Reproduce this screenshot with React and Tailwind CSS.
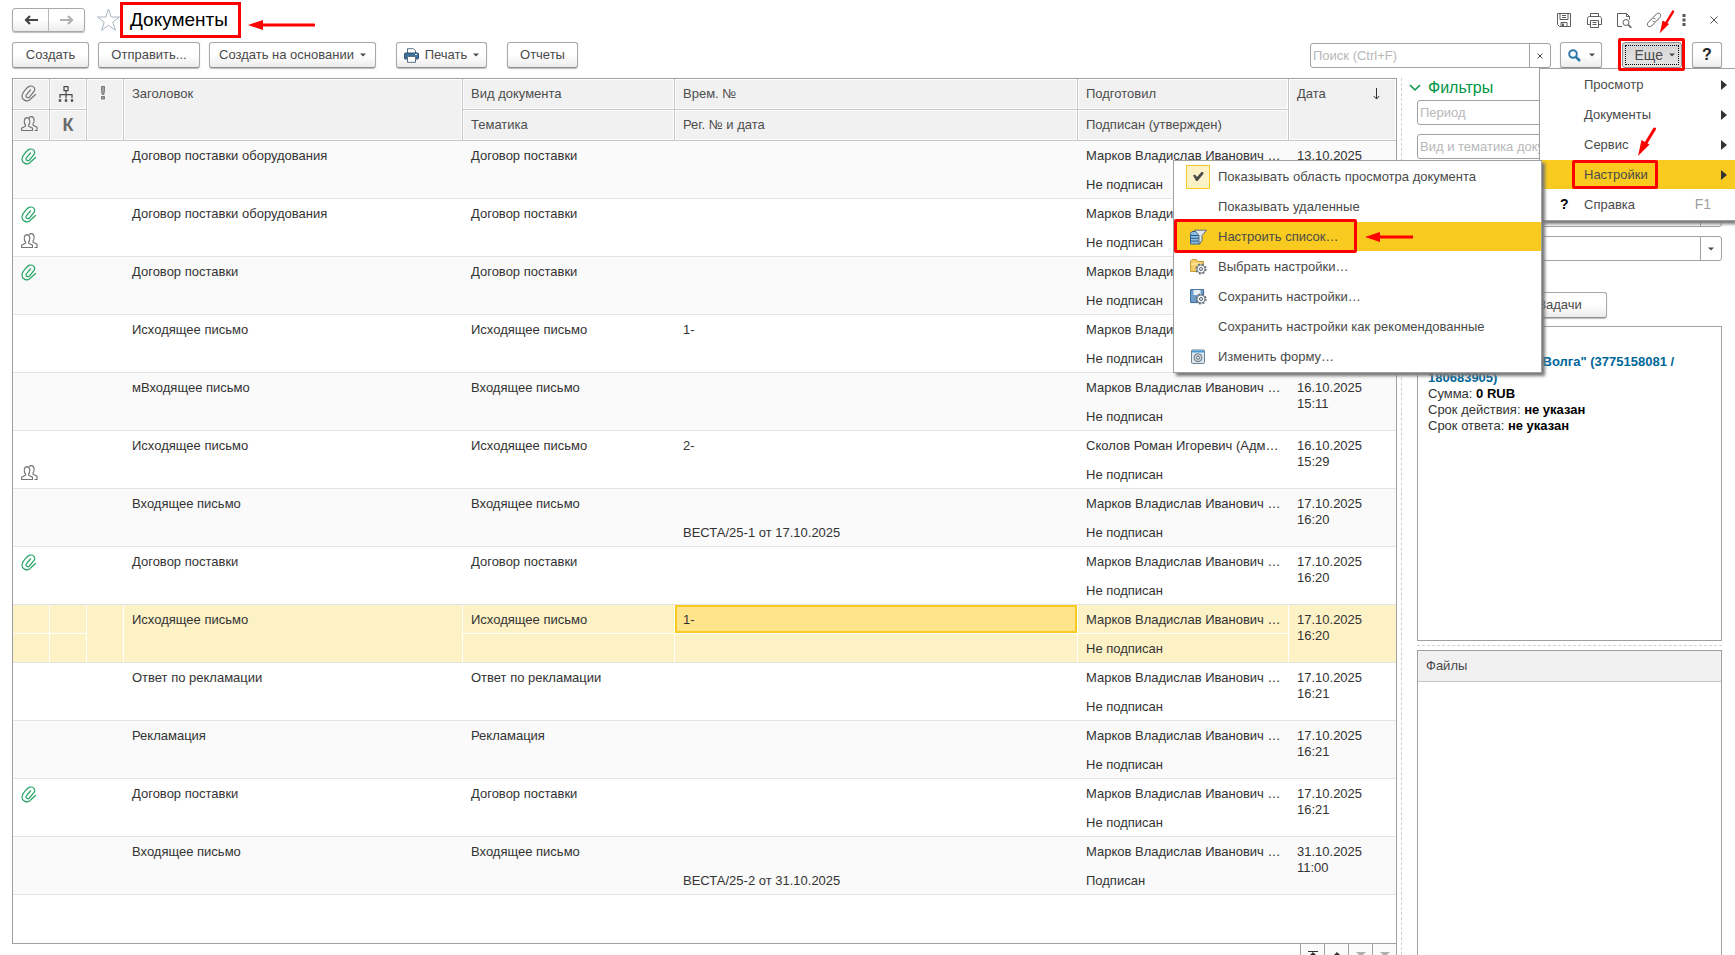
import clsx from 'clsx';

const rows = [
  { clip: true, title: 'Договор поставки оборудования', kind: 'Договор поставки', author: 'Марков Владислав Иванович …', date: '13.10.2025', time: '15:02' },
  { clip: true, people: true, title: 'Договор поставки оборудования', kind: 'Договор поставки', author: 'Марков Владислав Иванович …', date: '13.10.2025', time: '15:02' },
  { clip: true, title: 'Договор поставки', kind: 'Договор поставки', author: 'Марков Владислав Иванович …', date: '13.10.2025', time: '15:02' },
  { title: 'Исходящее письмо', kind: 'Исходящее письмо', temp: '1-', author: 'Марков Владислав Иванович …', date: '16.10.2025', time: '15:02' },
  { title: 'мВходящее письмо', kind: 'Входящее письмо', author: 'Марков Владислав Иванович …', date: '16.10.2025', time: '15:11' },
  { people: true, title: 'Исходящее письмо', kind: 'Исходящее письмо', temp: '2-', author: 'Сколов Роман Игоревич (Адм…', date: '16.10.2025', time: '15:29' },
  { title: 'Входящее письмо', kind: 'Входящее письмо', reg: 'ВЕСТА/25-1 от 17.10.2025', author: 'Марков Владислав Иванович …', date: '17.10.2025', time: '16:20' },
  { clip: true, title: 'Договор поставки', kind: 'Договор поставки', author: 'Марков Владислав Иванович …', date: '17.10.2025', time: '16:20' },
  { selected: true, title: 'Исходящее письмо', kind: 'Исходящее письмо', temp: '1-', author: 'Марков Владислав Иванович …', date: '17.10.2025', time: '16:20' },
  { title: 'Ответ по рекламации', kind: 'Ответ по рекламации', author: 'Марков Владислав Иванович …', date: '17.10.2025', time: '16:21' },
  { title: 'Рекламация', kind: 'Рекламация', author: 'Марков Владислав Иванович …', date: '17.10.2025', time: '16:21' },
  { clip: true, title: 'Договор поставки', kind: 'Договор поставки', author: 'Марков Владислав Иванович …', date: '17.10.2025', time: '16:21' },
  { title: 'Входящее письмо', kind: 'Входящее письмо', reg: 'ВЕСТА/25-2 от 31.10.2025', author: 'Марков Владислав Иванович …', signed: 'Подписан', date: '31.10.2025', time: '11:00' },
];

const button =
  'flex h-[26px] shrink-0 items-center justify-center rounded-[3px] border border-[#a8a8a8] border-b-[#8f8f8f] bg-linear-to-b from-white from-50% to-[#ececec] shadow-[0_1px_1px_#bbb]';

function ClipIcon({ className }) {
  return (
    <svg width="16" height="17" viewBox="0 0 16 17" fill="none" stroke="currentColor" strokeWidth="1.200" strokeLinecap="round" className={className}>
      <path d="M14.500 9.500 8.500 15C5.500 17.300.5 14.500 1 10.500 1.300 7.500 6 2 8.800 1.200 12.500.2 14.800 3.500 13 6.500L8.500 12C7 13.500 4.200 12.200 5.200 10L9.500 5" />
    </svg>
  );
}

function PeopleIcon() {
  return (
    <svg width="17" height="16" viewBox="0 0 17 16" fill="none" stroke="#737373" strokeWidth="1.100">
      <path d="M.6 14.500v-2.300L4.500 10.200V9C2.800 7.500 2.500 1.600 6 1.600S9.300 7.500 7.600 9v1.200l3.900 2v2.300z" />
      <path d="M8 1.600c.7-.8 1.600-1 2.400-1 3.400 0 3.300 5.600 1.600 7.400v1.200l4 2v3.300h-2.500" />
    </svg>
  );
}

function TreeIcon() {
  return (
    <svg width="16" height="18" viewBox="0 0 16 18" fill="none" stroke="#4a4a4a" strokeWidth="1.200">
      <path d="M6 1.600h4v4H6zM8 5.600v8M2 13V9.600h12V13" />
      <path d="M.8 15.500h2.400M6.800 15.500h2.400M12.800 15.500h2.400" strokeWidth="2.400" />
    </svg>
  );
}

function Caret() {
  return (
    <svg width="6" height="4" viewBox="0 0 6 4" fill="#4a4a4a">
      <path d="M0 .5h6L3 3.500z" />
    </svg>
  );
}

function PrinterIcon() {
  return (
    <svg width="15" height="15" viewBox="0 0 15 15">
      <path d="M3.500 5V.7h6L11.500 2.700V5" fill="#fff" stroke="#5b6f80" />
      <rect x=".5" y="5" width="14" height="6" rx="1" fill="#3f709b" stroke="#2d5579" />
      <path d="M3.500 8.500h8v5.800h-8z" fill="#fff" stroke="#5b6f80" />
      <path d="M11 6.500h2" stroke="#fff" />
    </svg>
  );
}

function ToolIcon({ name }) {
  const paths = {
    save: (
      <>
        <path d="M1.500 1.500h13v13h-11l-2-2zM4 1.500v6h8v-6M6 3.500h4M6 5.500h4M5 14.500v-4h6v4" />
        <path d="M7 11.500v3" strokeWidth="2" />
      </>
    ),
    print: <path d="M4.500 4.500v-3h8v3M4.500 12.500h-3v-6c0-1.200.8-2 2-2h10c1.200 0 2 .8 2 2v6h-3M4.500 8.500h8v7h-8zM6.500 10.500h4M6.500 12.500h4" />,
    preview: (
      <>
        <path d="M6 14.500H1.500v-13h9l3 3v3M10.500 1.500v3h3" />
        <circle cx="10" cy="10.500" r="3" />
        <path d="m12.300 12.800 3 3" strokeWidth="1.600" />
      </>
    ),
    link: (
      <>
        <path d="M7 5.500 10.500 2c2.500-2.200 5.500.8 3.500 3.300L10.500 9c-1.300 1.200-3 1-4-.2" />
        <path d="M9 10.500 5.500 14C3 16.200 0 13.200 2 10.700L5.500 7c1.300-1.200 3-1 4 .2" />
      </>
    ),
  };
  return (
    <svg width="16" height="16" viewBox="0 0 16 16" fill="none" stroke="#5c5c5c" strokeWidth="1">
      {paths[name]}
    </svg>
  );
}

function Gear({ cx, cy }) {
  return (
    <g>
      <circle cx={cx} cy={cy} r="4.700" fill="none" stroke="#667078" strokeWidth="1.800" strokeDasharray="2 1.690" />
      <circle cx={cx} cy={cy} r="4" fill="#f4f6f7" stroke="#77828a" />
      <circle cx={cx} cy={cy} r="1.500" fill="#fff" stroke="#555f66" />
    </g>
  );
}

function MenuIcon({ name }) {
  if (name === 'check') {
    return (
      <span className="flex size-6 items-center justify-center border border-[#f9cb20] bg-[#fdf1c6]">
        <svg width="12" height="11" viewBox="0 0 12 11" fill="#4a4a4a">
          <path d="M1 4.500 3 3.500 5 6 9.500 1h1.800v2L5.500 10H4.200z" />
        </svg>
      </span>
    );
  }
  return (
    <svg width="17" height="16" viewBox="0 0 17 16">
      {name === 'filter' && (
        <>
          <path d="M.5 4.500 2 2.500h6l2 3v9.500H.5z" fill="#8fbde6" stroke="#2f648f" />
          <path d="M.5 6.500h9M.5 9.300h9M.5 12.100h9" stroke="#235985" />
          <path d="M4.500 1.200h12L12 6.500v5.500l-3 2.500v-8z" fill="#dfe8ef" stroke="#5c6f7e" />
        </>
      )}
      {name === 'folder' && (
        <>
          <path d="M.6 12.500V2L2 .6h4.500L8 2.500h5.500v10z" fill="#f5ce69" stroke="#c49a37" />
          <path d="M1 5h12" stroke="#fff0bf" />
          <Gear cx={11} cy={10} />
        </>
      )}
      {name === 'disk' && (
        <>
          <path d="M.6.600h13v13h-13z" fill="#6f9fc9" stroke="#3b6b96" />
          <path d="M3.500 1h7v5h-7z" fill="#e8f1f8" />
          <Gear cx={11} cy={10} />
        </>
      )}
      {name === 'form' && (
        <>
          <rect x="1.500" y="1" width="13" height="13.500" rx="1" fill="#dce7ef" stroke="#6d8496" />
          <path d="M2 2.500h12" stroke="#4d9fd7" strokeWidth="2" />
          <circle cx="8" cy="8.700" r="4" fill="#c9d0d5" stroke="#6d7b85" />
          <circle cx="8" cy="8.700" r="1.500" fill="#fff" stroke="#5d6b75" />
        </>
      )}
    </svg>
  );
}

function ArrowLeft({ className }) {
  return (
    <svg viewBox="0 0 68 10" preserveAspectRatio="xMinYMid slice" className={className}>
      <path d="M0 5 15 0v10z" fill="red" />
      <path d="M12 5h54" stroke="red" strokeWidth="3" strokeLinecap="round" />
    </svg>
  );
}

function ArrowDown({ className }) {
  return (
    <svg width="20" height="30" viewBox="0 0 20 30" className={className}>
      <path d="M17.500 2 9 16" stroke="red" strokeWidth="3" strokeLinecap="round" />
      <path d="M1 29 4.500 13l8 4.500z" fill="red" />
    </svg>
  );
}

function HeadCell({ children, className, ...rest }) {
  return (
    <th className={clsx('border-r border-b border-[#c6c6c6] bg-[#f1f1f1] px-2 text-left align-top font-normal leading-[30px] shadow-[inset_0_0_0_1px_#fff]', className)} {...rest}>
      {children}
    </th>
  );
}

function DocumentRow({ row, odd }) {
  const cell = clsx(
    'h-[29px] truncate pt-px pr-[7px] pb-0 pl-2 align-top leading-[27px]',
    row.selected && 'border-r border-b border-white bg-[#fdf1c6]',
  );
  const bottom = clsx(cell, row.selected ? 'border-b-[#e4e4e4]' : 'border-b border-[#e4e4e4]');
  return (
    <tbody className={odd ? 'bg-[#fafafa]' : 'bg-white'}>
      <tr>
        <td className={cell}>{row.clip && <ClipIcon className="mt-1.5 text-[#26a565]" />}</td>
        <td className={cell} />
        <td rowSpan={2} className={bottom} />
        <td rowSpan={2} className={bottom}>{row.title}</td>
        <td className={cell}>{row.kind}</td>
        <td className={clsx(cell, row.selected && 'bg-[#ffe48c] shadow-[inset_0_0_0_2px_#f9cb20]')}>{row.temp}</td>
        <td className={cell}>{row.author}</td>
        <td rowSpan={2} className={clsx(bottom, 'border-r-0')}>
          <div className="pt-1.5 leading-4">
            {row.date}
            <br />
            {row.time}
          </div>
        </td>
      </tr>
      <tr>
        <td className={bottom}>{row.people && <span className="flex pt-1"><PeopleIcon /></span>}</td>
        <td className={bottom} />
        <td className={bottom} />
        <td className={bottom}>{row.reg}</td>
        <td className={bottom}>{row.signed || 'Не подписан'}</td>
      </tr>
    </tbody>
  );
}

function DocumentsTable() {
  return (
    <table className="w-full table-fixed border-separate border-spacing-0 text-[#333]">
      <colgroup>
        <col className="w-[37px]" />
        <col className="w-[37px]" />
        <col className="w-[37px]" />
        <col className="w-[339px]" />
        <col className="w-[212px]" />
        <col />
        <col className="w-[211px]" />
        <col className="w-[107px]" />
      </colgroup>
      <thead className="text-[#4d4d4d]">
        <tr className="h-[31px]">
          <HeadCell><ClipIcon className="mt-1.5 text-[#777]" /></HeadCell>
          <HeadCell><span className="flex pt-1.5"><TreeIcon /></span></HeadCell>
          <HeadCell rowSpan={2}>
            <svg width="16" height="20" viewBox="0 0 16 20" fill="#a0a0a0" stroke="#777" className="mt-1">
              <path d="M6.500 3.500h3v4l-.7 4H7.200l-.7-4zM6.500 13.500h3v2.500h-3z" />
            </svg>
          </HeadCell>
          <HeadCell rowSpan={2}>Заголовок</HeadCell>
          <HeadCell>Вид документа</HeadCell>
          <HeadCell>Врем. №</HeadCell>
          <HeadCell>Подготовил</HeadCell>
          <HeadCell rowSpan={2} className="border-r-0">
            <span className="flex items-center justify-between pr-2">
              Дата
              <svg width="7" height="12" viewBox="0 0 7 12" fill="none" stroke="#333">
                <path d="M3.500 0v11M.8 8l2.700 3 2.700-3" />
              </svg>
            </span>
          </HeadCell>
        </tr>
        <tr className="h-[31px]">
          <HeadCell><span className="flex pt-1.5"><PeopleIcon /></span></HeadCell>
          <HeadCell><span className="block text-center text-[18px] font-bold text-[#6b6b6b]">К</span></HeadCell>
          <HeadCell>Тематика</HeadCell>
          <HeadCell>Рег. № и дата</HeadCell>
          <HeadCell>Подписан (утвержден)</HeadCell>
        </tr>
      </thead>
      {rows.map((row, i) => (
        <DocumentRow key={i} row={row} odd={i % 2 === 0} />
      ))}
    </table>
  );
}

function FilterField({ label, select }) {
  return (
    <div className="flex h-[25px] rounded-[3px] border border-[#a0a0a0] bg-white">
      <input aria-label={label || 'Фильтр'} placeholder={label} className="min-w-0 flex-1 px-0.5 outline-none placeholder:text-[#b8b8b8]" />
      {select && (
        <button aria-label="Выбрать" className="flex w-[21px] items-center justify-center border-l border-[#a0a0a0]">
          <Caret />
        </button>
      )}
    </div>
  );
}

function SidePanel() {
  return (
    <aside className="flex w-[305px] shrink-0 flex-col">
      <h2 className="-ml-2 flex h-[22px] items-center gap-[7px] pb-0.5 text-[16px] text-[#009646]">
        <svg width="12" height="8" viewBox="0 0 12 8" fill="none" stroke="currentColor" strokeWidth="1.500">
          <path d="m1 1 5 5 5-5" />
        </svg>
        Фильтры
      </h2>
      <div className="flex flex-col gap-[9px]">
        <FilterField label="Период" />
        <FilterField label="Вид и тематика документа" />
        <FilterField />
        <FilterField select />
        <FilterField select />
      </div>
      <div className="mt-[31px] flex pl-[96px]">
        <button className={clsx(button, 'w-[94px]')}>Задачи</button>
      </div>
      <section className="mt-2 h-[315px] shrink-0 border border-[#a0a0a0] px-2.5 pt-[27px] leading-4 text-[#333]">
        <p>
          Контрагент:{' '}
          <a href="#partner" className="font-bold text-[#006699]">ООО "Волга" (3775158081 / 180683905)</a>
        </p>
        <p>Сумма: <b className="text-black">0 RUB</b></p>
        <p>Срок действия: <b className="text-black">не указан</b></p>
        <p>Срок ответа: <b className="text-black">не указан</b></p>
      </section>
      <div className="my-1 border-t border-dashed border-[#d0d0d0]" />
      <section className="flex-1 border border-b-0 border-[#a0a0a0]">
        <h3 className="h-[31px] border-b border-[#c6c6c6] bg-[#f1f1f1] px-2 leading-[30px]">Файлы</h3>
      </section>
    </aside>
  );
}

const moreItems = [
  { label: 'Просмотр', nested: true },
  { label: 'Документы', nested: true },
  { label: 'Сервис', nested: true },
  { label: 'Настройки', nested: true, active: true },
  { label: 'Справка', hint: 'F1' },
];

const settingsItems = [
  { label: 'Показывать область просмотра документа', icon: 'check' },
  { label: 'Показывать удаленные' },
  { label: 'Настроить список…', icon: 'filter', active: true },
  { label: 'Выбрать настройки…', icon: 'folder' },
  { label: 'Сохранить настройки…', icon: 'disk' },
  { label: 'Сохранить настройки как рекомендованные' },
  { label: 'Изменить форму…', icon: 'form' },
];

function MoreMenu() {
  return (
    <div className="absolute top-[68px] right-0 z-10 w-[196px] border border-r-0 border-[#a0a0a0] bg-white pt-px shadow-[2px_3px_3px_#777]">
      {moreItems.map((item) => (
        <button key={item.label} className={clsx('mb-px flex h-[29px] w-full items-center pr-2', item.active && 'bg-[#f9cb20]')}>
          <span className="w-11 pl-5 text-left text-[14px] font-bold text-black">{item.hint && '?'}</span>
          <span className="flex-1 text-left">{item.label}</span>
          {item.nested && (
            <svg width="6" height="10" viewBox="0 0 6 10" fill="#333">
              <path d="M0 0v10l6-5z" />
            </svg>
          )}
          {item.hint && <span className="pr-4 text-[14px] text-[#a0a0a0]">{item.hint}</span>}
        </button>
      ))}
      <div className="absolute top-[91px] left-8 h-[29px] w-[86px] rounded-[2px] border-3 border-[red]" />
      <ArrowDown className="absolute top-[58px] left-[97px]" />
    </div>
  );
}

function SettingsMenu() {
  return (
    <div className="absolute top-[160px] right-[193px] z-20 w-[369px] border border-[#a0a0a0] bg-white pt-px shadow-[3px_3px_3px_#777]">
      {settingsItems.map((item) => (
        <button key={item.label} className={clsx('mb-px flex h-[29px] w-full items-center', item.active && 'bg-[#f9cb20]')}>
          <span className="flex w-[44px] justify-center pl-1">{item.icon && <MenuIcon name={item.icon} />}</span>
          {item.label}
        </button>
      ))}
      <div className="absolute top-[58px] left-0 h-[34px] w-[183px] rounded-[2px] border-3 border-[red]" />
      <ArrowLeft className="absolute top-[71px] left-[191px] h-[10px] w-[48px]" />
    </div>
  );
}

export default function App() {
  return (
    <div className="relative flex h-screen flex-col overflow-hidden bg-white pr-[13px] pl-3 font-['Liberation_Sans',Arial,sans-serif] text-[13px] text-[#4a4a4a]">
      <header className="relative flex h-[42px] shrink-0 items-center pb-0.5">
        <div className="flex h-6 w-[73px] rounded-[3px] border border-[#a8a8a8] bg-linear-to-b from-white from-50% to-[#ececec] shadow-[0_1px_1px_#bbb]">
          <button aria-label="Назад" className="flex flex-1 items-center justify-center border-r border-[#b8b8b8]">
            <svg width="14" height="10" viewBox="0 0 14 10" fill="none" stroke="#444" strokeWidth="2.200">
              <path d="M14 5H2M6 1 2 5l4 4" />
            </svg>
          </button>
          <button aria-label="Вперед" className="flex flex-1 items-center justify-center">
            <svg width="14" height="10" viewBox="0 0 14 10" fill="none" stroke="#b0b0b0" strokeWidth="2.200">
              <path d="M0 5h12M8 1l4 4-4 4" />
            </svg>
          </button>
        </div>
        <button aria-label="В избранное" className="ml-3">
          <svg width="23" height="24" viewBox="0 0 23 24" fill="none" stroke="#a9b4bf">
            <path d="m11.500 1 2.700 8h8.300l-6.700 5 2.600 8.300-6.900-5-6.900 5L7.200 14 .5 9h8.300z" />
          </svg>
        </button>
        <h1 className="ml-2.5 text-[19px] text-black">Документы</h1>
        <div className="absolute top-0.5 left-[108px] h-9 w-[121px] border-3 border-[red]" />
        <ArrowLeft className="absolute top-5 left-[236px] h-[10px] w-[67px]" />
        <div className="ml-auto flex items-center gap-3.5">
          {['save', 'print', 'preview', 'link'].map((name) => (
            <button key={name} aria-label={name}><ToolIcon name={name} /></button>
          ))}
          <button aria-label="Меню">
            <svg width="16" height="12" viewBox="0 0 16 12" fill="#555">
              <path d="M6.500 0h3v3h-3zM6.500 4.500h3v3h-3zM6.500 9h3v3h-3z" />
            </svg>
          </button>
          <button aria-label="Закрыть" className="mr-1 ml-1">
            <svg width="8" height="8" viewBox="0 0 8 8" stroke="#555">
              <path d="m.5.500 7 7M7.500.500l-7 7" />
            </svg>
          </button>
        </div>
        <ArrowDown className="absolute top-2.5 right-[45px] h-6" />
      </header>

      <div className="flex h-9 shrink-0 items-start">
        <button className={clsx(button, 'w-[77px]')}>Создать</button>
        <button className={clsx(button, 'ml-[9px] w-[102px]')}>Отправить...</button>
        <button className={clsx(button, 'ml-[9px] w-[167px] gap-1.5')}>Создать на основании <Caret /></button>
        <button className={clsx(button, 'ml-5 w-[91px] gap-1.5')}><PrinterIcon /> Печать <Caret /></button>
        <button className={clsx(button, 'ml-5 w-[71px]')}>Отчеты</button>
        <div className="mt-px ml-auto flex h-[25px] w-[241px] rounded-[3px] border border-[#a0a0a0]">
          <input aria-label="Поиск" placeholder="Поиск (Ctrl+F)" className="min-w-0 flex-1 px-0.5 outline-none placeholder:text-[#b8b8b8]" />
          <button aria-label="Очистить" className="flex w-[21px] items-center justify-center border-l border-[#a0a0a0]">
            <svg width="6" height="6" viewBox="0 0 6 6" stroke="#444">
              <path d="m.5.500 5 5M5.500.500l-5 5" />
            </svg>
          </button>
        </div>
        <button aria-label="Найти" className={clsx(button, 'ml-[9px] w-[42px] gap-2')}>
          <svg width="13" height="13" viewBox="0 0 13 13" fill="none" stroke="#2f78ab" strokeWidth="2">
            <circle cx="5" cy="5" r="3.800" />
            <path d="m8 8 4 4" strokeWidth="2.500" />
          </svg>
          <Caret />
        </button>
        <div className="relative z-20 ml-5">
          <button className="flex h-[26px] w-[60px] items-center justify-center rounded-[3px] border border-[#8f8f8f] bg-linear-to-b from-[#d4d4d4] to-[#e6e6e6] p-0.5">
            <span className="flex size-full items-center justify-end gap-1.5 border border-dotted border-black pr-[3px] text-[14px]">Еще <Caret /></span>
          </button>
          <div className="absolute -top-1 -left-1 h-[33px] w-[67px] rounded-[2px] border-3 border-[red]" />
        </div>
        <button className={clsx(button, 'ml-2.5 w-[30px] text-[16px] font-bold text-[#222]')}>?</button>
      </div>

      <main className="flex min-h-0 flex-1">
        <div className="flex min-w-0 flex-1 flex-col">
          <div className="min-h-0 flex-1 overflow-hidden border border-[#a0a0a0]">
            <DocumentsTable />
          </div>
          <div className="flex h-[11px] shrink-0 items-start justify-end overflow-hidden">
            {['Первая', 'Предыдущая', 'Следующая', 'Последняя'].map((name, i) => (
              <button key={name} aria-label={name} className="flex h-6 w-6 shrink-0 items-start justify-center border-r border-[#a0a0a0] bg-[#fbfbfb] pt-[7px] first:w-[25px] first:border-l">
                <svg width="10" height="10" viewBox="0 0 10 10" fill={i < 2 ? '#333' : '#b0b0b0'}>
                  {i === 0 && <path d="M0 0h10v1H0zM5 1 1 5h8z" />}
                  {i === 1 && <path d="M5 1 1 5h8z" />}
                  {i > 1 && <path d="M0 1h10L5 6z" />}
                </svg>
              </button>
            ))}
          </div>
        </div>
        <div className="mr-[15px] ml-1 border-l border-dashed border-[#d0d0d0]" />
        <SidePanel />
      </main>

      <MoreMenu />
      <SettingsMenu />
    </div>
  );
}
